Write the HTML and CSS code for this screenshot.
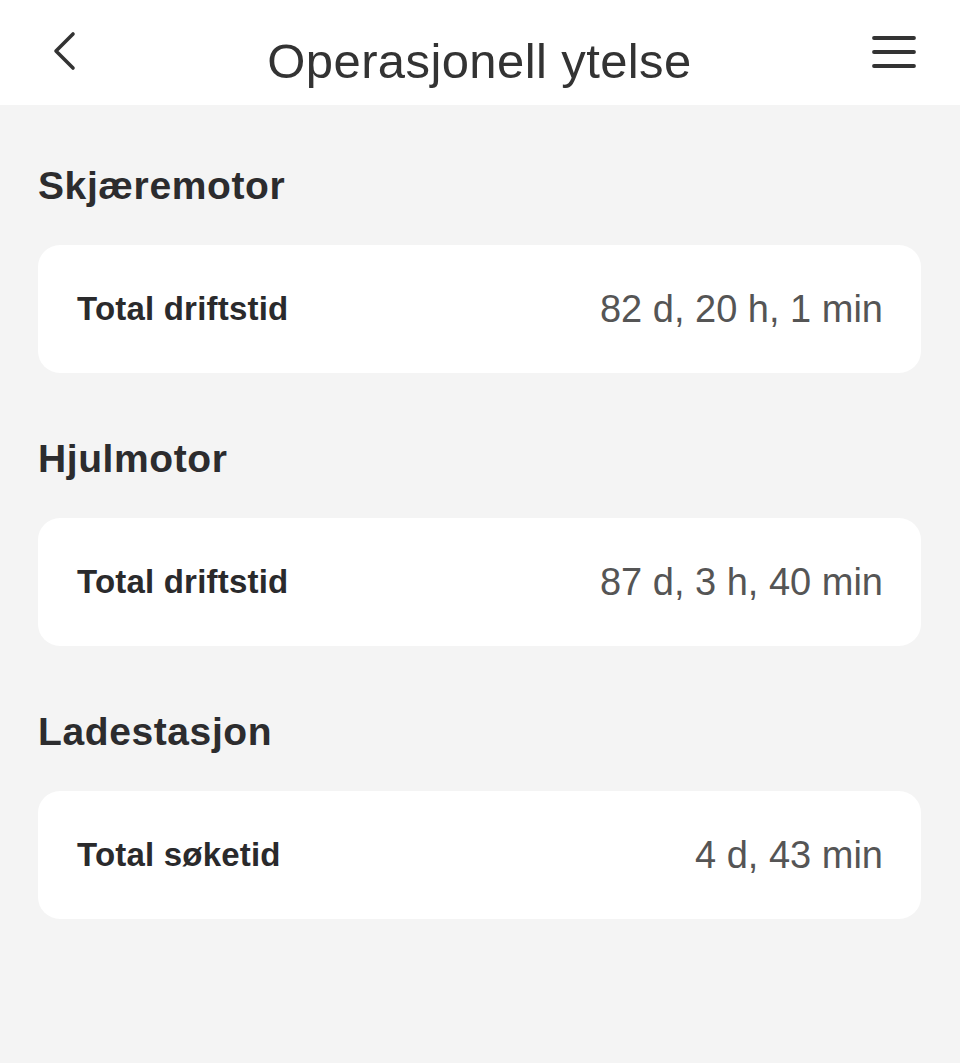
FILE: index.html
```html
<!DOCTYPE html>
<html lang="no">
    <head>
        <meta charset="UTF-8" />
        <meta name="viewport" content="width=device-width, initial-scale=1.0" />
        <title>Operasjonell ytelse</title>
        <link rel="stylesheet" href="styles.css">
    </head>
    <body>
        <div class="topbar">
            <a class="back" href="#">
                <svg width="24" height="40" viewBox="0 0 24 40">
                    <path d="M20 3 L3 20 L20 37" fill="none" stroke="#333" stroke-width="3.6" stroke-linecap="round" stroke-linejoin="round" />
                </svg>
            </a>
            <h1 class="title">Operasjonell ytelse</h1>
            <a class="menu" href="#">
                <svg width="44" height="34" viewBox="0 0 44 34">
                    <path d="M2 3 H42 M2 17 H42 M2 31 H42" fill="none" stroke="#333" stroke-width="3.8" stroke-linecap="round" />
                </svg>
            </a>
        </div>

        <div class="content">
            <div class="section">
                <h2 class="section-title">Skjæremotor</h2>
                <div class="card">
                    <span class="label">Total driftstid</span>
                    <span class="value">82 d, 20 h, 1 min</span>
                </div>
            </div>

            <div class="section">
                <h2 class="section-title">Hjulmotor</h2>
                <div class="card">
                    <span class="label">Total driftstid</span>
                    <span class="value">87 d, 3 h, 40 min</span>
                </div>
            </div>

            <div class="section">
                <h2 class="section-title">Ladestasjon</h2>
                <div class="card">
                    <span class="label">Total søketid</span>
                    <span class="value">4 d, 43 min</span>
                </div>
            </div>
        </div>
    </body>
</html>
```

FILE: styles.css
```css
* {
    box-sizing: border-box;
}
html,
body {
    margin: 0;
    padding: 0;
    background: #f4f4f4;
    font-family: "Liberation Sans", Arial, sans-serif;
    min-height: 100%;
}
.topbar {
    height: 105px;
    background: #fff;
    display: flex;
    align-items: center;
    padding: 0 44px 8px 53px;
}
.back,
.menu {
    display: flex;
}
.back svg {
    margin-top: 4px;
}
.menu svg {
    margin-top: 6px;
}
.title {
    flex: 1;
    margin: 0;
    padding: 24px 0 0 10px;
    text-align: center;
    font-size: 49px;
    font-weight: normal;
    color: #333;
    letter-spacing: 0.4px;
}
.content {
    padding: 57px 39px 80px 38px;
}
.section {
    margin-bottom: 62px;
}
.section-title {
    margin: 0 0 36px;
    font-size: 39px;
    line-height: 47px;
    font-weight: bold;
    color: #2c2c2e;
    letter-spacing: 0.6px;
}
.card {
    height: 128px;
    background: #fff;
    border-radius: 22px;
    display: flex;
    align-items: center;
    justify-content: space-between;
    padding: 0 38px 0 39px;
}
.label {
    font-size: 33px;
    font-weight: bold;
    color: #2a2a2c;
    letter-spacing: 0.2px;
}
.value {
    font-size: 38px;
    color: #555;
}
```
